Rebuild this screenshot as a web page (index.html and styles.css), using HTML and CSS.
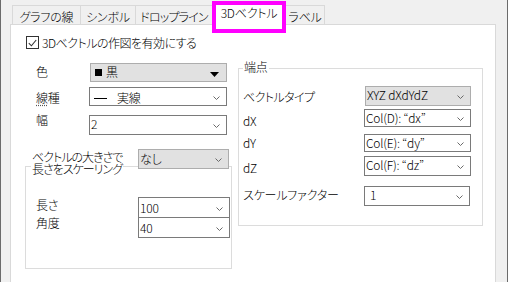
FILE: index.html
```html
<!DOCTYPE html>
<html lang="ja">
<head>
    <meta charset="UTF-8">
    <title>3Dベクトル</title>
    <link rel="stylesheet" href="styles.css">
</head>
<body>
    <div class="dialog">
        <!-- タブ -->
        <div class="tabs">
            <div class="tab tab-line">グラフの線</div>
            <div class="tab tab-symbol">シンボル</div>
            <div class="tab tab-drop">ドロップライン</div>
            <div class="tab tab-vector active">3Dベクトル</div>
            <div class="tab tab-label">ラベル</div>
        </div>

        <div class="panel">
            <label class="check-row">
                <span class="checkbox">
                    <svg width="9" height="8" viewBox="0 0 9 8"><path d="M0.8 4.2 L3.4 6.8 L8.2 1" fill="none" stroke="#333" stroke-width="1.1"/></svg>
                </span>
                <span class="check-text">3Dベクトルの作図を有効にする</span>
            </label>

            <div class="columns">
                <!-- 左列 -->
                <div class="col-left">
                    <div class="field color-field">
                        <span class="label">色</span>
                        <div class="combo gray">
                            <span class="swatch"></span>
                            <span class="combo-text">黒</span>
                            <svg class="tri" width="9" height="5" viewBox="0 0 9 5"><polygon points="0,0 9,0 4.5,5" fill="#000"/></svg>
                        </div>
                    </div>
                    <div class="field type-field">
                        <span class="label"><span class="hint">線</span>種</span>
                        <div class="combo">
                            <span class="line-sample"></span>
                            <span class="combo-text">実線</span>
                            <svg class="chev" width="7" height="4" viewBox="0 0 7 4"><polyline points="0.5,0.5 3.5,3.5 6.5,0.5" fill="none" stroke="#6a6a6a"/></svg>
                        </div>
                    </div>
                    <div class="field width-field">
                        <span class="label">幅</span>
                        <div class="combo">
                            <span class="combo-text">2</span>
                            <svg class="chev" width="7" height="4" viewBox="0 0 7 4"><polyline points="0.5,0.5 3.5,3.5 6.5,0.5" fill="none" stroke="#6a6a6a"/></svg>
                        </div>
                    </div>

                    <div class="scale-box">
                        <div class="scale-head">
                            <span class="scale-title">ベクトルの大きさで<br>長さをスケーリング</span>
                            <div class="combo gray">
                                <span class="combo-text">なし</span>
                                <svg class="chev" width="7" height="4" viewBox="0 0 7 4"><polyline points="0.5,0.5 3.5,3.5 6.5,0.5" fill="none" stroke="#6a6a6a"/></svg>
                            </div>
                        </div>
                        <div class="field scale-field len-field">
                            <span class="label">長さ</span>
                            <div class="combo">
                                <span class="combo-text">100</span>
                                <svg class="chev" width="7" height="4" viewBox="0 0 7 4"><polyline points="0.5,0.5 3.5,3.5 6.5,0.5" fill="none" stroke="#6a6a6a"/></svg>
                            </div>
                        </div>
                        <div class="field scale-field angle-field">
                            <span class="label">角度</span>
                            <div class="combo">
                                <span class="combo-text">40</span>
                                <svg class="chev" width="7" height="4" viewBox="0 0 7 4"><polyline points="0.5,0.5 3.5,3.5 6.5,0.5" fill="none" stroke="#6a6a6a"/></svg>
                            </div>
                        </div>
                    </div>
                </div>

                <!-- 右列：端点 -->
                <div class="col-right">
                    <div class="endpoint-box">
                        <div class="endpoint-title">端点</div>
                        <div class="field ep-field ep-type">
                            <span class="label">ベクトルタイプ</span>
                            <div class="combo gray">
                                <span class="combo-text">XYZ dXdYdZ</span>
                                <svg class="chev" width="7" height="4" viewBox="0 0 7 4"><polyline points="0.5,0.5 3.5,3.5 6.5,0.5" fill="none" stroke="#6a6a6a"/></svg>
                            </div>
                        </div>
                        <div class="field ep-field ep-dx">
                            <span class="label">dX</span>
                            <div class="combo">
                                <span class="combo-text">Col(D): “dx”</span>
                                <svg class="chev" width="7" height="4" viewBox="0 0 7 4"><polyline points="0.5,0.5 3.5,3.5 6.5,0.5" fill="none" stroke="#6a6a6a"/></svg>
                            </div>
                        </div>
                        <div class="field ep-field ep-dy">
                            <span class="label">dY</span>
                            <div class="combo">
                                <span class="combo-text">Col(E): “dy”</span>
                                <svg class="chev" width="7" height="4" viewBox="0 0 7 4"><polyline points="0.5,0.5 3.5,3.5 6.5,0.5" fill="none" stroke="#6a6a6a"/></svg>
                            </div>
                        </div>
                        <div class="field ep-field ep-dz">
                            <span class="label">dZ</span>
                            <div class="combo">
                                <span class="combo-text">Col(F): “dz”</span>
                                <svg class="chev" width="7" height="4" viewBox="0 0 7 4"><polyline points="0.5,0.5 3.5,3.5 6.5,0.5" fill="none" stroke="#6a6a6a"/></svg>
                            </div>
                        </div>
                        <div class="field ep-field ep-scale">
                            <span class="label">スケールファクター</span>
                            <div class="combo">
                                <span class="combo-text">1</span>
                                <svg class="chev" width="7" height="4" viewBox="0 0 7 4"><polyline points="0.5,0.5 3.5,3.5 6.5,0.5" fill="none" stroke="#6a6a6a"/></svg>
                            </div>
                        </div>
                    </div>
                </div>
            </div>
        </div>
    </div>
</body>
</html>
```

FILE: styles.css
```css
*,
*::before,
*::after {
    box-sizing: border-box;
    margin: 0;
    padding: 0;
}

body {
    font-family: "Noto Sans CJK JP", "Liberation Sans", sans-serif;
    font-size: 12px;
    font-weight: 300;
    font-feature-settings: "palt";
    letter-spacing: -0.2px;
    color: #000;
    background: #f0f0f0;
}

.dialog {
    width: 508px;
    height: 282px;
    overflow: hidden;
    border-left: 1px solid #6b6b6b;
    border-right: 1px solid #6b6b6b;
    padding: 5px 11px 0 9px;
}

/* タブ */
.tabs {
    display: flex;
    height: 19px;
    padding-left: 2px;
    position: relative;
    z-index: 1;
}

.tab {
    height: 19px;
    border: 1px solid #d9d9d9;
    border-bottom: none;
    background: #f0f0f0;
    text-align: center;
    white-space: nowrap;
    padding-top: 3px;
    line-height: 16px;
}

.tab + .tab {
    margin-left: -1px;
}

.tab-line { width: 69px; }
.tab-symbol { width: 56px; }
.tab-drop { width: 78px; letter-spacing: -0.8px; }
.tab-vector { width: 74px; }
.tab-label { width: 40px; }

.tab.active {
    position: relative;
    background: #fff;
    margin-top: -3px;
    height: 23px;
    padding-top: 2px;
}

/* 強調枠 */
.tab.active::after {
    content: "";
    position: absolute;
    left: -1px;
    top: -2px;
    width: 74px;
    height: 32px;
    border: 4px solid #ff00ff;
}

.panel {
    height: 300px;
    border: 1px solid #d9d9d9;
    background: #fff;
    padding: 11px 0 0 14px;
}

.check-row {
    display: flex;
    align-items: flex-start;
    gap: 3px;
    margin-left: 1px;
    height: 13px;
}

.checkbox {
    width: 13px;
    height: 13px;
    border: 1px solid #333;
    background: #fff;
    display: flex;
    align-items: center;
    justify-content: center;
}

.check-text {
    line-height: 16px;
    margin-top: -1px;
    letter-spacing: -0.5px;
}

.columns {
    display: flex;
    gap: 6px;
    margin-top: 14px;
}

.col-left {
    width: 207px;
}

.col-right {
    width: 245px;
    margin-top: 5px;
}

/* 行とコンボ */
.field {
    display: flex;
    align-items: flex-start;
}

.label {
    line-height: 16px;
    white-space: nowrap;
    flex-shrink: 0;
}

.hint {
    text-decoration: underline dotted #555;
    text-underline-offset: 2px;
}

.combo {
    display: flex;
    align-items: flex-start;
    border: 1px solid #7a7a7a;
    background: #fff;
    padding-left: 1px;
    flex-shrink: 0;
}

.combo.gray {
    background: #e1e1e1;
    border-color: #adadad;
}

.combo-text {
    line-height: 13px;
    margin-top: 1px;
    white-space: nowrap;
}

.chev {
    margin-left: auto;
    margin-right: 6px;
    align-self: center;
    margin-top: 2px;
}

.col-left .field .label {
    width: 64px;
    padding-left: 11px;
}

.color-field .label { margin-top: 1px; }

.color-field .combo {
    width: 137px;
    height: 19px;
    margin-left: 1px;
    align-items: center;
    padding-left: 4px;
}

.color-field .combo-text {
    margin-top: -1px;
    line-height: 16px;
}

.swatch {
    width: 7px;
    height: 7px;
    background: #000;
    margin-right: 4px;
}

.tri {
    margin-left: auto;
    margin-right: 7px;
    margin-top: 4px;
}

.type-field {
    margin-top: 5px;
}

.type-field .label { margin-top: 3px; }

.type-field .combo,
.width-field .combo {
    width: 138px;
}

.type-field .combo {
    height: 19px;
    padding-left: 4px;
}

.line-sample {
    width: 13px;
    height: 1px;
    background: #000;
    margin: 10px 10px 0 0;
}

.type-field .combo-text {
    margin-top: 3px;
}

.width-field {
    margin-top: 9px;
}

.width-field .label { margin-top: -3px; }

.width-field .combo {
    height: 20px;
}

/* スケーリング枠 */
.scale-box {
    margin-top: 31px;
    height: 103px;
    border: 1px solid #dcdcdc;
}

.scale-head {
    display: flex;
    align-items: flex-start;
    margin-top: -16px;
}

.scale-title {
    margin-left: 5px;
    padding: 0 1px;
    background: #fff;
    line-height: 12px;
    letter-spacing: -1px;
    white-space: nowrap;
}

.scale-head .combo {
    width: 91px;
    height: 20px;
    margin-left: auto;
    margin-right: 2px;
    margin-top: -2px;
}

.scale-head .combo-text {
    margin-top: 2px;
}

.len-field {
    margin-top: 22px;
}

.col-left .scale-field .label {
    width: 112px;
    padding-left: 10px;
}

.scale-field .combo {
    width: 92px;
    height: 21px;
}

.scale-field .combo-text {
    margin-top: 3px;
}

.angle-field {
    margin-top: -1px;
}

.angle-field .label { margin-top: -2px; }

/* 端点 */
.endpoint-box {
    height: 158px;
    border: 1px solid #dcdcdc;
}

.endpoint-title {
    width: fit-content;
    margin: -10px 0 0 4px;
    padding: 0 1px;
    background: #fff;
    line-height: 16px;
}

.ep-field .label {
    width: 125px;
    padding-left: 4px;
}

.ep-type .label { letter-spacing: -0.6px; }

.ep-field .combo {
    width: 107px;
    height: 18px;
}

.ep-type { margin-top: 11px; }
.ep-dx { margin-top: 3px; }
.ep-dy { margin-top: 5px; }
.ep-dz { margin-top: 4px; }
.ep-scale { margin-top: 10px; }

.ep-type .label { margin-top: 3px; }
.ep-dx .label { margin-top: 4px; }
.ep-dy .label { margin-top: 1px; }
.ep-dz .label { margin-top: 4px; }
.ep-scale .label { margin-top: 1px; }

.ep-type .combo {
    width: 106px;
    height: 20px;
    margin-left: 1px;
}

.ep-dz .combo {
    height: 20px;
}

.ep-scale .combo {
    width: 106px;
    height: 20px;
}

.ep-scale .combo-text {
    padding-left: 4px;
}
```
